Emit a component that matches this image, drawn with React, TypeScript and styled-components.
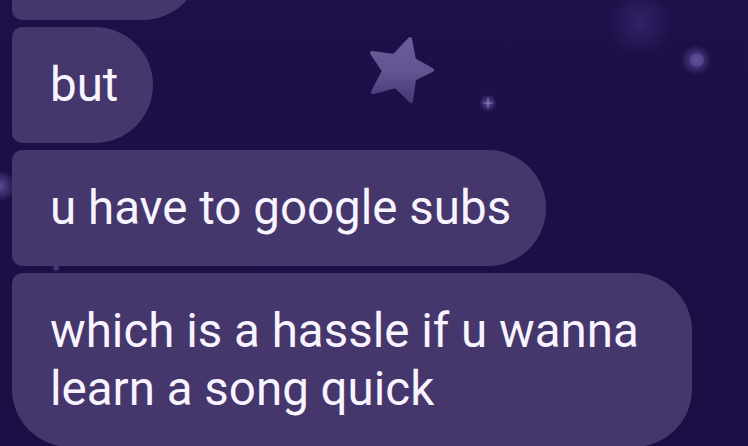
import styled, { createGlobalStyle } from "styled-components";

const GlobalStyle = createGlobalStyle`
  html, body {
    margin: 0;
    padding: 0;
    background: #1d0e46;
  }
  body {
    font-family: Roboto, "Noto Sans", sans-serif;
  }
`;

const Screen = styled.main`
  position: relative;
  width: 748px;
  height: 446px;
  overflow: hidden;
  background: linear-gradient(180deg, #1e0f49 0%, #1c0d44 100%);
`;

const Backdrop = styled.svg`
  position: absolute;
  inset: 0;
  width: 100%;
  height: 100%;
  pointer-events: none;
`;

const Thread = styled.div`
  position: relative;
  display: flex;
  flex-direction: column;
  align-items: flex-start;
  gap: 7px;
  padding-left: 12px;
  margin-top: -96px;
`;

const Bubble = styled.div<{ $last?: boolean }>`
  box-sizing: border-box;
  max-width: 680px;
  padding: 29px 35px 29px 38px;
  background: #45366b;
  color: #f7f3ff;
  font-size: 47.5px;
  line-height: 58px;
  border-radius: 10px 58px 58px ${(p) => (p.$last ? "58px" : "10px")};
`;

// the earlier message, scrolled up so only its lower edge shows
const Stub = styled.div`
  width: 189px;
  height: 116px;
  background: #45366b;
  border-radius: 10px 58px 58px 10px;
`;

const messages = [
  "but",
  "u have to google subs",
  "which is a hassle if u wanna learn a song quick",
];

function Sky() {
  return (
    <Backdrop viewBox="0 0 748 446">
      <defs>
        <linearGradient id="starFill" x1="0" y1="0" x2="0" y2="1">
          <stop offset="0" stopColor="#6c5c9c" />
          <stop offset="0.55" stopColor="#62528f" />
          <stop offset="1" stopColor="#463778" />
        </linearGradient>
        <radialGradient id="glow">
          <stop offset="0" stopColor="#8672c8" stopOpacity="0.6" />
          <stop offset="1" stopColor="#8672c8" stopOpacity="0" />
        </radialGradient>
        <radialGradient id="softGlow">
          <stop offset="0" stopColor="#4c3a8c" stopOpacity="0.45" />
          <stop offset="1" stopColor="#4c3a8c" stopOpacity="0" />
        </radialGradient>
      </defs>
      <circle cx="640" cy="22" r="34" fill="url(#softGlow)" />
      <circle cx="696" cy="60" r="15" fill="url(#glow)" />
      <circle cx="697" cy="60" r="7" fill="#6452a0" opacity="0.55" />
      <circle cx="0" cy="186" r="16" fill="url(#glow)" />
      <circle cx="488" cy="103" r="9" fill="url(#glow)" />
      <path
        d="M488 96 L489 102 L495 103 L489 104 L488 110 L487 104 L481 103 L487 102 Z"
        fill="#9d8cd0"
        opacity="0.6"
      />
      <circle cx="56" cy="268" r="4" fill="url(#glow)" />
      <polygon
        points="410,39 414,60 432,70 414,79 411,101 396,86 373,92 384,71 372,53 394,56"
        fill="url(#starFill)"
        stroke="url(#starFill)"
        strokeWidth="4"
        strokeLinejoin="round"
      />
    </Backdrop>
  );
}

export default function App() {
  return (
    <>
      <GlobalStyle />
      <Screen>
        <Sky />
        <Thread>
          <Stub />
          {messages.map((text, i) => (
            <Bubble key={i} $last={i === messages.length - 1}>
              {text}
            </Bubble>
          ))}
        </Thread>
      </Screen>
    </>
  );
}
